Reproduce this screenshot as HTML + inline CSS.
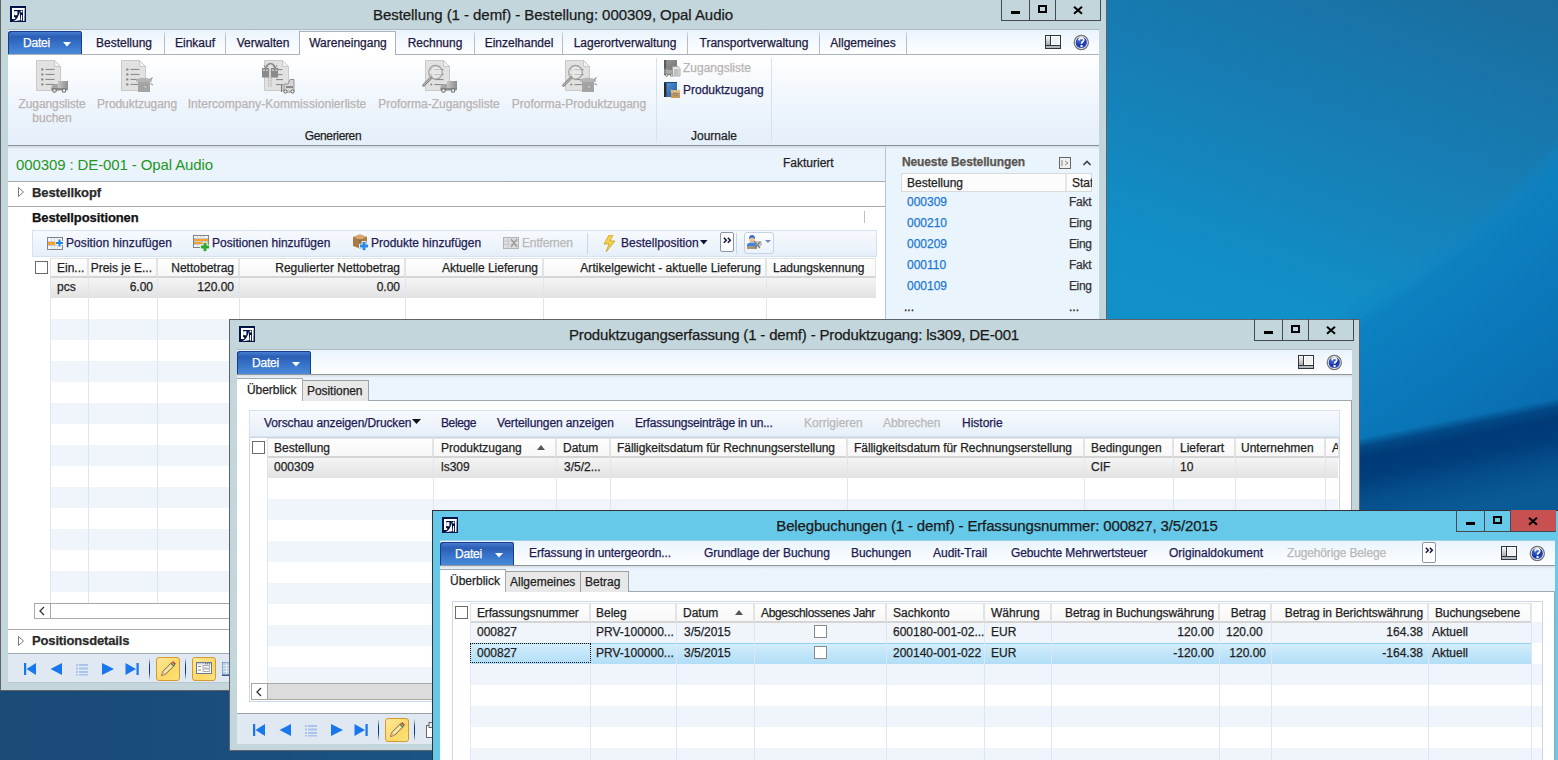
<!DOCTYPE html>
<html><head><meta charset="utf-8"><title>AX</title>
<style>
html,body{margin:0;padding:0;width:1558px;height:760px;overflow:hidden;background:#1a4b78;}
body{position:relative;font-family:"Liberation Sans", sans-serif;font-size:12px;}
body div, body svg{position:absolute;}
.t{white-space:nowrap;-webkit-text-stroke:0.25px;}
</style></head><body>
<div style="left:1107px;top:0;width:451px;height:520px;overflow:hidden"><div style="left:0;top:0;width:451px;height:520px;background:linear-gradient(200deg,#1a6c9c 0%,#1680b8 35%,#1190c8 60%,#0e8fcb 100%)"></div><div style="left:0;top:0;width:451px;height:520px;background:radial-gradient(circle at -286px -549px,rgba(20,150,210,0) 1006px,rgba(14,132,196,0.5) 1018px,rgba(12,128,192,0.92) 1030px,rgba(10,120,186,1) 1110px,rgba(8,104,172,1) 1240px)"></div><div style="left:-100px;top:510px;width:700px;height:90px;transform:rotate(-11.5deg);transform-origin:0 0;background:linear-gradient(rgba(0,60,120,0) 0px,rgba(0,62,122,0.8) 9px,#003b78 20px,#003d7a 38px,rgba(5,78,138,0.97) 62px,#0a5a96 90px)"></div><div style="left:-100px;top:599px;width:700px;height:160px;transform:rotate(-11.5deg);transform-origin:0 0;background:#0a5a96"></div></div>
<div style="left:0;top:680px;width:440px;height:80px;background:linear-gradient(90deg,#1a4a76,#1a4e7c 60%,#1a5485)"></div>
<div style="left:0px;top:-1px;width:1107px;height:692px;background:#c3d6dc;box-shadow:inset 0 0 0 1px #5f6266"></div>
<svg style="left:10px;top:6px" width="16" height="16" viewBox="0 0 16 16"><rect width="16" height="16" fill="#021346"/><g fill="#fff"><rect x="2" y="2" width="12.5" height="2"/><rect x="2" y="2" width="2" height="11"/><rect x="2" y="11.2" width="3.2" height="1.8"/><rect x="13" y="2" width="1.6" height="8"/><rect x="4.2" y="5.2" width="3.2" height="4"/><circle cx="11.5" cy="5.5" r="1"/><path d="M3 15.2Q8.5 13.5 9.6 5.5L10.4 14.2Z"/><rect x="11" y="9" width="1.1" height="5.6"/><rect x="13" y="10" width="1.5" height="5"/></g></svg>
<div class="t" style="top:5px;font-size:15px;line-height:20px;color:#1a1a1a;letter-spacing:-0.050px;left:153px;width:800px;text-align:center;">Bestellung (1 - demf) - Bestellung: 000309, Opal Audio</div>
<div style="left:1001px;top:-1px;width:100px;height:22px;border:1px solid #46494d;border-top:none;box-sizing:border-box;"></div>
<div style="left:1029px;top:-1px;width:1px;height:22px;background:#46494d"></div>
<div style="left:1055px;top:-1px;width:1px;height:22px;background:#46494d"></div>
<div style="left:1011px;top:11px;width:9px;height:3px;background:#000"></div>
<div style="left:1038px;top:5px;width:9px;height:8px;border:2px solid #000;box-sizing:border-box;"></div>
<svg style="left:1073px;top:6px" width="11" height="9"><path d="M1 0.8L9 7.8M9 0.8L1 7.8" stroke="#000" stroke-width="2"/></svg>
<div style="left:8px;top:29px;width:1091px;height:1px;background:#aeb9c2"></div>
<div style="left:8px;top:30px;width:1091px;height:24px;background:linear-gradient(#eaf4fd,#f6fafe 60%,#fdfeff)"></div>
<div style="left:8px;top:54px;width:1091px;height:1px;background:#a9b2ba"></div>
<div style="left:8px;top:31px;width:74px;height:23px;background:linear-gradient(#4f86d4 0,#3a70c4 3px,#2b5fb5 6px,#3672c8 13px,#4a8ad9 100%);border-radius:3px 3px 0 0;box-shadow:inset 1px 1px 0 #1b3c8c,inset -1px 0 0 #1b3c8c;"></div>
<div class="t" style="top:35px;font-size:12px;line-height:16px;color:#ffffff;letter-spacing:-0.203px;left:23px;">Datei</div>
<svg style="left:63px;top:42px" width="8" height="5"><path d="M0 0H8L4 4.5Z" fill="#fff"/></svg>
<div style="left:164px;top:31px;width:1px;height:23px;background:linear-gradient(#dfe6ec,#b4bcc4 30%,#b4bcc4)"></div>
<div class="t" style="top:35px;font-size:12px;line-height:16px;color:#1c1840;left:-276px;width:800px;text-align:center;">Bestellung</div>
<div style="left:225px;top:31px;width:1px;height:23px;background:linear-gradient(#dfe6ec,#b4bcc4 30%,#b4bcc4)"></div>
<div class="t" style="top:35px;font-size:12px;line-height:16px;color:#1c1840;left:-205px;width:800px;text-align:center;">Einkauf</div>
<div style="left:299px;top:31px;width:1px;height:23px;background:linear-gradient(#dfe6ec,#b4bcc4 30%,#b4bcc4)"></div>
<div class="t" style="top:35px;font-size:12px;line-height:16px;color:#1c1840;left:-137px;width:800px;text-align:center;">Verwalten</div>
<div style="left:299px;top:31px;width:97px;height:24px;background:#fff;border:1px solid #a9b2ba;border-bottom:none;box-sizing:border-box;"></div>
<div class="t" style="top:35px;font-size:12px;line-height:16px;color:#1c1840;left:-52px;width:800px;text-align:center;">Wareneingang</div>
<div style="left:474px;top:31px;width:1px;height:23px;background:linear-gradient(#dfe6ec,#b4bcc4 30%,#b4bcc4)"></div>
<div class="t" style="top:35px;font-size:12px;line-height:16px;color:#1c1840;left:35px;width:800px;text-align:center;">Rechnung</div>
<div style="left:562px;top:31px;width:1px;height:23px;background:linear-gradient(#dfe6ec,#b4bcc4 30%,#b4bcc4)"></div>
<div class="t" style="top:35px;font-size:12px;line-height:16px;color:#1c1840;left:119px;width:800px;text-align:center;">Einzelhandel</div>
<div style="left:687px;top:31px;width:1px;height:23px;background:linear-gradient(#dfe6ec,#b4bcc4 30%,#b4bcc4)"></div>
<div class="t" style="top:35px;font-size:12px;line-height:16px;color:#1c1840;left:225px;width:800px;text-align:center;">Lagerortverwaltung</div>
<div style="left:819px;top:31px;width:1px;height:23px;background:linear-gradient(#dfe6ec,#b4bcc4 30%,#b4bcc4)"></div>
<div class="t" style="top:35px;font-size:12px;line-height:16px;color:#1c1840;left:354px;width:800px;text-align:center;">Transportverwaltung</div>
<div style="left:906px;top:31px;width:1px;height:23px;background:linear-gradient(#dfe6ec,#b4bcc4 30%,#b4bcc4)"></div>
<div class="t" style="top:35px;font-size:12px;line-height:16px;color:#1c1840;left:463px;width:800px;text-align:center;">Allgemeines</div>
<svg style="left:1045px;top:35px" width="16" height="14" viewBox="0 0 16 14"><defs><linearGradient id="lg1" x1="0" y1="0" x2="0" y2="1"><stop offset="0" stop-color="#fafafa"/><stop offset="1" stop-color="#a4a8ac"/></linearGradient></defs><rect x="0.5" y="0.5" width="15" height="13" fill="#fff" stroke="#2e353b"/><rect x="1" y="1" width="4" height="9.5" fill="url(#lg1)"/><rect x="6.5" y="1.5" width="8" height="8.5" fill="#f1f1f1" stroke="#fff"/><path d="M5.5 1V10.5M1 10.5H15" stroke="#2e353b"/><rect x="1" y="11" width="14" height="2" fill="#b2b7bc"/></svg>
<svg style="left:1073px;top:34px" width="17" height="17" viewBox="0 0 17 17"><defs><radialGradient id="hg" cx="0.35" cy="0.3" r="0.8"><stop offset="0" stop-color="#4a74e0"/><stop offset="0.6" stop-color="#1434a8"/><stop offset="1" stop-color="#3a5ac8"/></radialGradient></defs><circle cx="8.3" cy="8.5" r="7.7" fill="#727272"/><circle cx="8.3" cy="8.5" r="6.5" fill="#ececec"/><circle cx="8.3" cy="8.5" r="5.6" fill="url(#hg)"/><path d="M6 6.3Q6.2 4 8.5 4Q10.8 4.1 10.7 6.1Q10.6 7.4 9.3 8.1Q8.6 8.6 8.6 9.8" stroke="#f4f4f4" stroke-width="1.8" fill="none"/><rect x="7.5" y="11" width="2.1" height="2.1" fill="#f4f4f4"/></svg>
<div style="left:8px;top:55px;width:1091px;height:90px;background:linear-gradient(#ffffff,#eef5fc 55%,#e4effa)"></div>
<div style="left:8px;top:145px;width:1091px;height:1px;background:#8a939b"></div>
<div style="left:656px;top:58px;width:1px;height:84px;background:#d8e2ec"></div>
<div style="left:771px;top:58px;width:1px;height:84px;background:#d8e2ec"></div>
<svg style="left:32px;top:60px" width="40" height="34" viewBox="-4 0 40 34"><defs><linearGradient id="tg" x1="0" x2="1"><stop offset="0" stop-color="#c4c4c4"/><stop offset="1" stop-color="#8e8e8e"/></linearGradient></defs><path d="M0.5 0.5H18.5L24.5 6.5V30.5H0.5Z" fill="#e1e1e1" stroke="#c9c9c9"/><path d="M18.5 0.5V6.5H24.5Z" fill="#f2f2f2" stroke="#c9c9c9" stroke-linejoin="round"/><circle cx="6.3" cy="9.4" r="1.2" fill="#8a8a8a"/><rect x="9.5" y="8.9" width="9" height="1.1" fill="#8c8c8c"/><circle cx="6.3" cy="14.4" r="1.2" fill="#8a8a8a"/><rect x="9.5" y="13.9" width="9" height="1.1" fill="#8c8c8c"/><circle cx="6.3" cy="19.4" r="1.2" fill="#8a8a8a"/><rect x="9.5" y="18.9" width="9" height="1.1" fill="#8c8c8c"/><circle cx="6.3" cy="24.4" r="1.2" fill="#8a8a8a"/><rect x="9.5" y="23.9" width="9" height="1.1" fill="#8c8c8c"/><rect x="22" y="21" width="10" height="8" fill="url(#tg)"/><path d="M15.5 30V26.5L18 24H22V30Z" fill="#a6a6a6"/><rect x="15.5" y="28" width="16.5" height="2.2" fill="#8a8a8a"/><circle cx="18.5" cy="30.5" r="1.8" fill="#eee" stroke="#6f6f6f" stroke-width="1.1"/><circle cx="28" cy="30.5" r="1.8" fill="#eee" stroke="#6f6f6f" stroke-width="1.1"/></svg>
<div class="t" style="top:96px;font-size:12px;line-height:16px;color:#b9b2b2;letter-spacing:-0.087px;left:-348px;width:800px;text-align:center;">Zugangsliste</div>
<div class="t" style="top:110px;font-size:12px;line-height:16px;color:#b9b2b2;left:-348px;width:800px;text-align:center;">buchen</div>
<svg style="left:117px;top:60px" width="40" height="34" viewBox="-4 0 40 34"><defs><linearGradient id="tg" x1="0" x2="1"><stop offset="0" stop-color="#c4c4c4"/><stop offset="1" stop-color="#8e8e8e"/></linearGradient></defs><path d="M0.5 0.5H18.5L24.5 6.5V30.5H0.5Z" fill="#e1e1e1" stroke="#c9c9c9"/><path d="M18.5 0.5V6.5H24.5Z" fill="#f2f2f2" stroke="#c9c9c9" stroke-linejoin="round"/><circle cx="6.3" cy="9.4" r="1.2" fill="#8a8a8a"/><rect x="9.5" y="8.9" width="9" height="1.1" fill="#8c8c8c"/><circle cx="6.3" cy="14.4" r="1.2" fill="#8a8a8a"/><rect x="9.5" y="13.9" width="9" height="1.1" fill="#8c8c8c"/><circle cx="6.3" cy="19.4" r="1.2" fill="#8a8a8a"/><rect x="9.5" y="18.9" width="9" height="1.1" fill="#8c8c8c"/><circle cx="6.3" cy="24.4" r="1.2" fill="#8a8a8a"/><rect x="9.5" y="23.9" width="9" height="1.1" fill="#8c8c8c"/><rect x="17" y="21" width="12" height="11" fill="#a4a4a4"/><path d="M15 19.5Q22 16 31 19.5L30.5 22H15.5Z" fill="#b4b4b4"/><path d="M29 20L31.5 17.5M29.5 23.5L32 25" stroke="#9a9a9a" stroke-width="1.2"/><rect x="22" y="25.5" width="4" height="2.5" fill="#c2c2c2" stroke="#909090" stroke-width="0.6"/></svg>
<div class="t" style="top:96px;font-size:12px;line-height:16px;color:#b9b2b2;letter-spacing:-0.056px;left:-263px;width:800px;text-align:center;">Produktzugang</div>
<svg style="left:260px;top:60px" width="40" height="34" viewBox="-4 0 40 34"><defs><linearGradient id="tg" x1="0" x2="1"><stop offset="0" stop-color="#c4c4c4"/><stop offset="1" stop-color="#8e8e8e"/></linearGradient></defs><path d="M0.5 0.5H18.5L24.5 6.5V30.5H0.5Z" fill="#e1e1e1" stroke="#c9c9c9"/><path d="M18.5 0.5V6.5H24.5Z" fill="#f2f2f2" stroke="#c9c9c9" stroke-linejoin="round"/><rect x="9.5" y="9" width="9" height="1.1" fill="#8c8c8c"/><rect x="9.5" y="14" width="9" height="1.1" fill="#8c8c8c"/><rect x="12" y="19" width="7" height="1.1" fill="#8c8c8c"/><rect x="12" y="24" width="7" height="1.1" fill="#8c8c8c"/><rect x="4.5" y="18" width="3" height="3" fill="none" stroke="#bdbdbd" stroke-width="0.8"/><rect x="4.5" y="23" width="3" height="3" fill="none" stroke="#bdbdbd" stroke-width="0.8"/><rect x="-2" y="8" width="7" height="9.5" fill="#8a8a8a"/><rect x="7" y="8" width="7" height="9.5" fill="#8a8a8a"/><g fill="#c8c8c8"><rect x="-1" y="9.5" width="2" height="1.5"/><rect x="2" y="9.5" width="2" height="1.5"/><rect x="8" y="9.5" width="2" height="1.5"/><rect x="11" y="9.5" width="2" height="1.5"/><rect x="5.5" y="9" width="1" height="8"/></g><path d="M2 6.5Q6.5 0.5 11 6.5" stroke="#8a8a8a" stroke-width="1.4" fill="none"/><path d="M0 5.5L2 8L4 5.5M9 5.5L11 8L13 5.5" stroke="#8a8a8a" stroke-width="1.2" fill="none"/><rect x="17" y="25" width="1.2" height="7" fill="#777"/><path d="M20 32V24H24L26 19.5H30V32Z" fill="#d4d4d4" stroke="#8a8a8a" stroke-width="0.9"/><rect x="22" y="26" width="7" height="2" fill="#8a8a8a"/><circle cx="21.5" cy="31.5" r="1.6" fill="#eee" stroke="#666"/><circle cx="28.5" cy="31.5" r="1.6" fill="#eee" stroke="#666"/></svg>
<div class="t" style="top:96px;font-size:12px;line-height:16px;color:#b9b2b2;letter-spacing:0.060px;left:-123px;width:800px;text-align:center;">Intercompany-Kommissionierliste</div>
<svg style="left:421px;top:60px" width="40" height="34" viewBox="-4 0 40 34"><defs><linearGradient id="tg" x1="0" x2="1"><stop offset="0" stop-color="#c4c4c4"/><stop offset="1" stop-color="#8e8e8e"/></linearGradient></defs><path d="M0.5 0.5H18.5L24.5 6.5V30.5H0.5Z" fill="#e1e1e1" stroke="#c9c9c9"/><path d="M18.5 0.5V6.5H24.5Z" fill="#f2f2f2" stroke="#c9c9c9" stroke-linejoin="round"/><circle cx="6.3" cy="9.5" r="1.1" fill="#8a8a8a"/><rect x="9.5" y="9.0" width="9" height="1.1" fill="#8c8c8c"/><circle cx="6.3" cy="14.5" r="1.1" fill="#8a8a8a"/><rect x="9.5" y="14.0" width="9" height="1.1" fill="#8c8c8c"/><circle cx="6.3" cy="24.5" r="1.1" fill="#8a8a8a"/><rect x="9.5" y="24.0" width="9" height="1.1" fill="#8c8c8c"/><rect x="9.5" y="19" width="9" height="1.1" fill="#8c8c8c"/><circle cx="10.5" cy="12.3" r="6.8" fill="rgba(235,235,235,0.6)" stroke="#a2a2a2" stroke-width="1.3"/><path d="M6.3 17.5L-1.5 25.5" stroke="#8a8a8a" stroke-width="2.6" stroke-linecap="round"/><path d="M6.3 17.5L-1.5 25.5" stroke="#d0d0d0" stroke-width="0.8"/><rect x="22" y="21" width="10" height="8" fill="url(#tg)"/><path d="M15.5 30V26.5L18 24H22V30Z" fill="#a6a6a6"/><rect x="15.5" y="28" width="16.5" height="2.2" fill="#8a8a8a"/><circle cx="18.5" cy="30.5" r="1.8" fill="#eee" stroke="#6f6f6f" stroke-width="1.1"/><circle cx="28" cy="30.5" r="1.8" fill="#eee" stroke="#6f6f6f" stroke-width="1.1"/></svg>
<div class="t" style="top:96px;font-size:12px;line-height:16px;color:#b9b2b2;left:39px;width:800px;text-align:center;">Proforma-Zugangsliste</div>
<svg style="left:561px;top:60px" width="40" height="34" viewBox="-4 0 40 34"><defs><linearGradient id="tg" x1="0" x2="1"><stop offset="0" stop-color="#c4c4c4"/><stop offset="1" stop-color="#8e8e8e"/></linearGradient></defs><path d="M0.5 0.5H18.5L24.5 6.5V30.5H0.5Z" fill="#e1e1e1" stroke="#c9c9c9"/><path d="M18.5 0.5V6.5H24.5Z" fill="#f2f2f2" stroke="#c9c9c9" stroke-linejoin="round"/><circle cx="6.3" cy="9.5" r="1.1" fill="#8a8a8a"/><rect x="9.5" y="9.0" width="9" height="1.1" fill="#8c8c8c"/><circle cx="6.3" cy="14.5" r="1.1" fill="#8a8a8a"/><rect x="9.5" y="14.0" width="9" height="1.1" fill="#8c8c8c"/><circle cx="6.3" cy="24.5" r="1.1" fill="#8a8a8a"/><rect x="9.5" y="24.0" width="9" height="1.1" fill="#8c8c8c"/><rect x="9.5" y="19" width="9" height="1.1" fill="#8c8c8c"/><circle cx="10.5" cy="12.3" r="6.8" fill="rgba(235,235,235,0.6)" stroke="#a2a2a2" stroke-width="1.3"/><path d="M6.3 17.5L-1.5 25.5" stroke="#8a8a8a" stroke-width="2.6" stroke-linecap="round"/><path d="M6.3 17.5L-1.5 25.5" stroke="#d0d0d0" stroke-width="0.8"/><rect x="17" y="21" width="12" height="11" fill="#a4a4a4"/><path d="M15 19.5Q22 16 31 19.5L30.5 22H15.5Z" fill="#b4b4b4"/><path d="M29 20L31.5 17.5M29.5 23.5L32 25" stroke="#9a9a9a" stroke-width="1.2"/><rect x="22" y="25.5" width="4" height="2.5" fill="#c2c2c2" stroke="#909090" stroke-width="0.6"/></svg>
<div class="t" style="top:96px;font-size:12px;line-height:16px;color:#b9b2b2;letter-spacing:0.019px;left:179px;width:800px;text-align:center;">Proforma-Produktzugang</div>
<div class="t" style="top:128px;font-size:12px;line-height:16px;color:#1e1e1e;letter-spacing:-0.355px;left:-67px;width:800px;text-align:center;">Generieren</div>
<div class="t" style="top:128px;font-size:12px;line-height:16px;color:#1e1e1e;left:314px;width:800px;text-align:center;">Journale</div>
<svg style="left:664px;top:60px" width="17" height="17"><defs><linearGradient id="jg1" x1="0" y1="0" x2="1" y2="1"><stop offset="0" stop-color="#9a9a9a"/><stop offset="1" stop-color="#6a6a6a"/></linearGradient></defs><rect x="0" y="0" width="13" height="15" fill="url(#jg1)"/><rect x="0" y="0" width="2.2" height="15" fill="#5a5a5a"/><path d="M0 11V9.5L2 8H6V14H0Z" fill="#8a8a8a"/><rect x="2" y="10" width="6" height="4" fill="#aaa"/><circle cx="2.5" cy="15" r="1.3" fill="#ddd" stroke="#666" stroke-width="0.8"/><circle cx="7.5" cy="15" r="1.3" fill="#ddd" stroke="#666" stroke-width="0.8"/><path d="M8.5 6.5H14L16 8.5V16H8.5Z" fill="#e4e4e4" stroke="#9a9a9a" stroke-width="0.8"/><path d="M10 10H14.5M10 12H14.5M10 14H14.5" stroke="#888" stroke-width="0.8"/></svg>
<div class="t" style="top:60px;font-size:12px;line-height:16px;color:#b9b2b2;left:683px;">Zugangsliste</div>
<svg style="left:664px;top:82px" width="17" height="17"><defs><linearGradient id="jg2" x1="0" y1="0" x2="1" y2="1"><stop offset="0" stop-color="#5a9ae0"/><stop offset="1" stop-color="#1e5a98"/></linearGradient></defs><rect x="0" y="0" width="13" height="15" fill="url(#jg2)"/><rect x="0" y="0" width="2.4" height="15" fill="#2a2a2a"/><rect x="0" y="0" width="13" height="1" fill="#1a4a7a"/><path d="M7 9L6 7.5L9 8H15L16 7L15.5 9Z" fill="#d8b888"/><rect x="7" y="9" width="9" height="7" fill="#c89a58"/><rect x="7" y="9" width="9" height="1.5" fill="#e0c090"/><rect x="10" y="11.5" width="3" height="2" fill="#a8b8d0" stroke="#7a6040" stroke-width="0.5"/></svg>
<div class="t" style="top:82px;font-size:12px;line-height:16px;color:#1d1a52;left:683px;">Produktzugang</div>
<div style="left:8px;top:146px;width:1091px;height:537px;background:#ffffff"></div>
<div style="left:8px;top:146px;width:877px;height:35px;background:linear-gradient(#dfe6ee,#eaf3fc 3px,#eaf4fd)"></div>
<div class="t" style="top:155px;font-size:15px;line-height:20px;color:#1f961f;letter-spacing:-0.112px;left:16px;-webkit-text-stroke:0;">000309 : DE-001 - Opal Audio</div>
<div class="t" style="top:155px;font-size:12px;line-height:16px;color:#1e1e1e;left:783px;">Fakturiert</div>
<div style="left:8px;top:181px;width:877px;height:1px;background:#a8a8a8"></div>
<svg style="left:18px;top:187px" width="6" height="10"><path d="M0.5 0.5L5.5 5L0.5 9.5Z" fill="#fff" stroke="#777"/></svg>
<div class="t" style="top:185px;font-size:13px;line-height:16px;color:#2a2a2a;font-weight:700;letter-spacing:-0.098px;left:32px;">Bestellkopf</div>
<div style="left:8px;top:206px;width:877px;height:1px;background:#a8a8a8"></div>
<div class="t" style="top:210px;font-size:13px;line-height:16px;color:#111;font-weight:700;letter-spacing:-0.109px;left:32px;">Bestellpositionen</div>
<div style="left:864px;top:211px;width:1px;height:12px;background:#c0c0c0"></div>
<div style="left:32px;top:230px;width:845px;height:27px;background:linear-gradient(#f7fafe,#e6eff9);border:1px solid #d5e2f0;box-sizing:border-box;"></div>
<svg style="left:47px;top:237px" width="17" height="14"><rect x="0.5" y="0.5" width="15" height="12" fill="#f6f6f6" stroke="#7d848c"/><path d="M1 4.5H15M1 8.5H15" stroke="#c4c8cc"/><path d="M4.5 1V12M7.5 1V12M10.5 1V12" stroke="#d4d8dc"/><rect x="1" y="5" width="9" height="3" fill="#f2a232"/><path d="M12.5 2V10M8.5 6H16.5" stroke="#fff" stroke-width="4"/><path d="M12.5 2.5V9.5M9 6H16" stroke="#1f86e0" stroke-width="2.2"/></svg>
<div class="t" style="top:235px;font-size:12px;line-height:16px;color:#1d1a52;letter-spacing:0.066px;left:66px;">Position hinzufügen</div>
<svg style="left:193px;top:235px" width="18" height="18"><rect x="0.5" y="0.5" width="15" height="12" fill="#f6f6f6" stroke="#7d848c"/><path d="M1 3.5H15M1 6.5H15M1 9.5H15" stroke="#c4c8cc"/><path d="M4.5 1V12M7.5 1V12M10.5 1V12" stroke="#d4d8dc"/><rect x="1" y="4" width="14" height="2" fill="#f2a232"/><rect x="1" y="7" width="14" height="2" fill="#f2a232"/><path d="M12 7V17M7 12H17" stroke="#fff" stroke-width="4.6"/><path d="M12 7.8V16.2M7.8 12H16.2" stroke="#2ea82e" stroke-width="3"/></svg>
<div class="t" style="top:235px;font-size:12px;line-height:16px;color:#1d1a52;letter-spacing:0.015px;left:212px;">Positionen hinzufügen</div>
<svg style="left:352px;top:234px" width="18" height="18"><path d="M1 3L8 0.5L15 3V12L8 14.5L1 12Z" fill="#a87a48"/><path d="M1 3L8 5.5L15 3L8 0.5Z" fill="#d4a870"/><path d="M8 5.5V14.5" stroke="#7a5430"/><path d="M12 7V17M7 12H17" stroke="#fff" stroke-width="4.6"/><path d="M12 7.8V16.2M7.8 12H16.2" stroke="#2a8ae6" stroke-width="3"/></svg>
<div class="t" style="top:235px;font-size:12px;line-height:16px;color:#1d1a52;left:371px;">Produkte hinzufügen</div>
<svg style="left:503px;top:237px" width="16" height="12"><rect x="0.5" y="0.5" width="15" height="11" fill="#dedede" stroke="#b4b4b4"/><path d="M1 4H15M1 7.5H15M5 1V11" stroke="#c4c4c4" stroke-width="0.8"/><path d="M8 2L14 10M14 2L8 10" stroke="#9a9a9a" stroke-width="1.3"/></svg>
<div class="t" style="top:235px;font-size:12px;line-height:16px;color:#b8b8b8;letter-spacing:-0.150px;left:522px;">Entfernen</div>
<div style="left:587px;top:233px;width:1px;height:21px;background:#c9d6e4"></div>
<svg style="left:603px;top:235px" width="13" height="17"><path d="M6 0L1 9H6L3 17L12 6H7L10 0Z" fill="#f4d24a" stroke="#c9a020" stroke-width="0.8"/></svg>
<div class="t" style="top:235px;font-size:12px;line-height:16px;color:#1d1a52;letter-spacing:0.021px;left:621px;">Bestellposition</div>
<svg style="left:700px;top:240px" width="8" height="5"><path d="M0 0H7.5L3.75 4.5Z" fill="#10103a"/></svg>
<div style="left:720px;top:232px;width:14px;height:20px;background:#fff;border:1px solid #8a96a8;border-radius:2px;box-sizing:border-box;"></div>
<svg style="left:723px;top:237px" width="9" height="7"><path d="M0.8 0.8L3.3 3.3L0.8 5.8M4.8 0.8L7.3 3.3L4.8 5.8" stroke="#10103a" stroke-width="1.5" fill="none"/></svg>
<div style="left:736px;top:233px;width:1px;height:21px;background:#c9d6e4"></div>
<div style="left:744px;top:232px;width:30px;height:22px;background:linear-gradient(#fbfdff,#eaf2fb);border:1px solid #c4d2e2;border-radius:3px;box-sizing:border-box;"></div>
<svg style="left:746px;top:234px" width="26" height="16"><path d="M3 5Q3 1 6 1Q9 1 9 5Z" fill="#2a6ad0"/><circle cx="6" cy="6" r="2.6" fill="#f0c090"/><path d="M1 15V11Q1 8.5 6 8.5Q11 8.5 11 11V15Z" fill="#3a86e0"/><path d="M1 12H11V15H1Z" fill="#f0a030" opacity="0.6"/><path d="M8 7L14 14M14 8L9 14" stroke="#777" stroke-width="1.4"/><rect x="10" y="8" width="5" height="3" fill="none" stroke="#999"/><path d="M19 6H25L22 9Z" fill="#7088b0"/></svg>
<div style="left:50px;top:277px;width:826px;height:21px;background:linear-gradient(#f5f5f5,#ebebeb 55%,#e2e2e2)"></div>
<div style="left:50px;top:319px;width:826px;height:21px;background:#f0f5fc"></div>
<div style="left:50px;top:361px;width:826px;height:21px;background:#f0f5fc"></div>
<div style="left:50px;top:403px;width:826px;height:21px;background:#f0f5fc"></div>
<div style="left:50px;top:445px;width:826px;height:21px;background:#f0f5fc"></div>
<div style="left:50px;top:487px;width:826px;height:21px;background:#f0f5fc"></div>
<div style="left:50px;top:529px;width:826px;height:21px;background:#f0f5fc"></div>
<div style="left:50px;top:571px;width:826px;height:21px;background:#f0f5fc"></div>
<div style="left:50px;top:278px;width:1px;height:325px;background:#dde7f3"></div>
<div style="left:88px;top:278px;width:1px;height:325px;background:#dde7f3"></div>
<div style="left:157px;top:278px;width:1px;height:325px;background:#dde7f3"></div>
<div style="left:239px;top:278px;width:1px;height:325px;background:#dde7f3"></div>
<div style="left:405px;top:278px;width:1px;height:325px;background:#dde7f3"></div>
<div style="left:543px;top:278px;width:1px;height:325px;background:#dde7f3"></div>
<div style="left:766px;top:278px;width:1px;height:325px;background:#dde7f3"></div>
<div style="left:50px;top:258px;width:38px;height:20px;background:linear-gradient(#fefefe,#f7f7f7);border:1px solid #e3e3e3;border-bottom:2px solid #d5d5d5;box-sizing:border-box;"></div>
<div style="left:88px;top:258px;width:69px;height:20px;background:linear-gradient(#fefefe,#f7f7f7);border:1px solid #e3e3e3;border-bottom:2px solid #d5d5d5;box-sizing:border-box;"></div>
<div style="left:157px;top:258px;width:82px;height:20px;background:linear-gradient(#fefefe,#f7f7f7);border:1px solid #e3e3e3;border-bottom:2px solid #d5d5d5;box-sizing:border-box;"></div>
<div style="left:239px;top:258px;width:166px;height:20px;background:linear-gradient(#fefefe,#f7f7f7);border:1px solid #e3e3e3;border-bottom:2px solid #d5d5d5;box-sizing:border-box;"></div>
<div style="left:405px;top:258px;width:138px;height:20px;background:linear-gradient(#fefefe,#f7f7f7);border:1px solid #e3e3e3;border-bottom:2px solid #d5d5d5;box-sizing:border-box;"></div>
<div style="left:543px;top:258px;width:223px;height:20px;background:linear-gradient(#fefefe,#f7f7f7);border:1px solid #e3e3e3;border-bottom:2px solid #d5d5d5;box-sizing:border-box;"></div>
<div style="left:766px;top:258px;width:110px;height:20px;background:linear-gradient(#fefefe,#f7f7f7);border:1px solid #e3e3e3;border-bottom:2px solid #d5d5d5;box-sizing:border-box;"></div>
<div style="left:35px;top:261px;width:13px;height:13px;border:1px solid #6b6b6b;box-sizing:border-box;background:#fff"></div>
<div class="t" style="top:260px;font-size:12px;line-height:16px;color:#1e1e1e;left:57px;">Ein...</div>
<div class="t" style="top:260px;font-size:12px;line-height:16px;color:#1e1e1e;left:-448px;width:600px;text-align:right;">Preis je E...</div>
<div class="t" style="top:260px;font-size:12px;line-height:16px;color:#1e1e1e;left:-366px;width:600px;text-align:right;">Nettobetrag</div>
<div class="t" style="top:260px;font-size:12px;line-height:16px;color:#1e1e1e;left:-200px;width:600px;text-align:right;">Regulierter Nettobetrag</div>
<div class="t" style="top:260px;font-size:12px;line-height:16px;color:#1e1e1e;left:-62px;width:600px;text-align:right;">Aktuelle Lieferung</div>
<div class="t" style="top:260px;font-size:12px;line-height:16px;color:#1e1e1e;letter-spacing:0.036px;left:161px;width:600px;text-align:right;">Artikelgewicht - aktuelle Lieferung</div>
<div class="t" style="top:260px;font-size:12px;line-height:16px;color:#1e1e1e;letter-spacing:-0.042px;left:773px;">Ladungskennung</div>
<div class="t" style="top:279px;font-size:12px;line-height:16px;color:#1e1e1e;left:57px;">pcs</div>
<div class="t" style="top:279px;font-size:12px;line-height:16px;color:#1e1e1e;left:-447px;width:600px;text-align:right;">6.00</div>
<div class="t" style="top:279px;font-size:12px;line-height:16px;color:#1e1e1e;left:-366px;width:600px;text-align:right;">120.00</div>
<div class="t" style="top:279px;font-size:12px;line-height:16px;color:#1e1e1e;left:-200px;width:600px;text-align:right;">0.00</div>
<div style="left:34px;top:603px;width:842px;height:16px;background:#fff;border:1px solid #a8a8a8;box-sizing:border-box;"></div>
<div style="left:50px;top:603px;width:1px;height:16px;background:#a8a8a8"></div>
<svg style="left:38px;top:606px" width="8" height="10"><path d="M6 1L2 5L6 9" stroke="#333" stroke-width="1.3" fill="none"/></svg>
<div style="left:8px;top:629px;width:877px;height:1px;background:#a8a8a8"></div>
<svg style="left:18px;top:636px" width="6" height="10"><path d="M0.5 0.5L5.5 5L0.5 9.5Z" fill="#fff" stroke="#777"/></svg>
<div class="t" style="top:633px;font-size:13px;line-height:16px;color:#2a2a2a;font-weight:700;letter-spacing:-0.150px;left:32px;">Positionsdetails</div>
<div style="left:8px;top:653px;width:1091px;height:1px;background:#a0a8b0"></div>
<div style="left:8px;top:654px;width:1091px;height:29px;background:#e0e8f1"></div>
<div style="left:8px;top:682px;width:1091px;height:1px;background:#bac6ce"></div>
<svg style="left:24px;top:663px" width="120" height="13"><rect x="0" y="0" width="2.2" height="12" fill="#1877ee"/><path d="M12 0V12L2.5 6Z" fill="#1877ee"/><path d="M38 0V12L26.5 6Z" fill="#1877ee"/><g fill="#a8c4ec"><rect x="52" y="1" width="2" height="2"/><rect x="55" y="1" width="9" height="2"/><rect x="52" y="4.5" width="2" height="2"/><rect x="55" y="4.5" width="9" height="2"/><rect x="52" y="8" width="2" height="2"/><rect x="55" y="8" width="9" height="2"/><rect x="52" y="11" width="2" height="1.5"/><rect x="55" y="11" width="9" height="1.5"/></g><path d="M78 0V12L90 6Z" fill="#1877ee"/><path d="M101.5 0V12L112 6Z" fill="#1877ee"/><rect x="112.5" y="0" width="2.2" height="12" fill="#1877ee"/></svg>
<div style="left:149px;top:658px;width:1px;height:22px;background:linear-gradient(rgba(10,50,110,0),#0b3a78 35%,#0b3a78 65%,rgba(10,50,110,0))"></div>
<div style="left:156px;top:657px;width:24px;height:24px;background:linear-gradient(135deg,#fde89a,#fcd866 60%,#fde27e);border:1px solid #d49a30;border-radius:3px;box-sizing:border-box;"></div>
<svg style="left:160px;top:660px" width="17" height="17"><path d="M1.5 15.5L2.8 11.5L12 2.3L14.7 5L5.5 14.2Z" fill="#fbe7a0" stroke="#555" stroke-width="0.9"/><path d="M2.8 11.5L5.5 14.2L1.5 15.5Z" fill="#e8b080"/><path d="M12 2.3L14.7 5L16 3.7L13.3 1Z" fill="#d04848"/><path d="M11 3.3L13.7 6" stroke="#2a8a4a" stroke-width="1.2"/></svg>
<div style="left:185px;top:658px;width:1px;height:22px;background:linear-gradient(rgba(10,50,110,0),#0b3a78 35%,#0b3a78 65%,rgba(10,50,110,0))"></div>
<div style="left:192px;top:657px;width:24px;height:24px;background:linear-gradient(135deg,#fde89a,#fcd866 60%,#fde27e);border:1px solid #d49a30;border-radius:3px;box-sizing:border-box;"></div>
<svg style="left:196px;top:662px" width="17" height="13"><rect x="0.5" y="0.5" width="15" height="11" fill="#fff" stroke="#6a7a90"/><rect x="1" y="1" width="14" height="1.5" fill="#c8d0dc"/><path d="M2 4.5H5M2 8H5" stroke="#888" stroke-width="1"/><rect x="7" y="3.5" width="6.5" height="2.5" fill="none" stroke="#999" stroke-width="0.8"/><rect x="7" y="7" width="6.5" height="2.5" fill="none" stroke="#999" stroke-width="0.8"/><path d="M9 1.8H10M11 1.8H12M13 1.8H14" stroke="#556"/></svg>
<svg style="left:222px;top:662px" width="16" height="14"><g fill="#e6eef8" stroke="#5a7aa8" stroke-width="0.6"><rect x="0.5" y="0.5" width="15" height="12.5"/></g><g fill="#b8cde8"><rect x="1" y="1" width="3" height="2.2"/><rect x="5" y="1" width="10" height="2.2"/><rect x="1" y="4" width="3" height="2.2"/><rect x="5" y="4" width="10" height="2.2"/><rect x="1" y="7" width="3" height="2.2"/><rect x="5" y="7" width="10" height="2.2"/><rect x="1" y="10" width="3" height="2.2"/><rect x="5" y="10" width="10" height="2.2"/></g><rect x="0" y="12.5" width="16" height="1.5" fill="#3a5a90"/></svg>
<div style="left:885px;top:146px;width:1px;height:537px;background:#b8c4d0"></div>
<div style="left:886px;top:146px;width:213px;height:537px;background:#eaf4fd"></div>
<div style="left:8px;top:146px;width:1091px;height:3px;background:linear-gradient(#d3d9de,rgba(220,228,236,0))"></div>
<div class="t" style="top:154px;font-size:12px;line-height:16px;color:#5a5550;font-weight:700;letter-spacing:-0.119px;left:902px;">Neueste Bestellungen</div>
<svg style="left:1059px;top:157px" width="12" height="12"><rect x="0.5" y="0.5" width="11" height="11" fill="#eee" stroke="#666"/><path d="M3 3V9M6 4L9 6L6 8" stroke="#888" fill="none"/></svg>
<svg style="left:1083px;top:160px" width="8" height="6"><path d="M0.5 5L4 1.5L7.5 5" stroke="#444" stroke-width="1.6" fill="none"/></svg>
<div style="left:901px;top:173px;width:191px;height:19px;background:#fcfcfc;border:1px solid #dadada;box-sizing:border-box;"></div>
<div style="left:1065px;top:174px;width:2px;height:17px;background:#e6e6e6"></div>
<div class="t" style="top:175px;font-size:12px;line-height:16px;color:#1e1e1e;left:907px;">Bestellung</div>
<div class="t" style="top:175px;font-size:12px;line-height:16px;color:#1e1e1e;left:1072px;">Stat</div>
<div class="t" style="top:194px;font-size:12px;line-height:16px;color:#1e78d2;left:907px;">000309</div>
<div class="t" style="top:194px;font-size:12px;line-height:16px;color:#333;letter-spacing:-0.211px;left:1069px;">Fakt</div>
<div class="t" style="top:215px;font-size:12px;line-height:16px;color:#1e78d2;left:907px;">000210</div>
<div class="t" style="top:215px;font-size:12px;line-height:16px;color:#333;letter-spacing:-0.383px;left:1069px;">Eing</div>
<div class="t" style="top:236px;font-size:12px;line-height:16px;color:#1e78d2;left:907px;">000209</div>
<div class="t" style="top:236px;font-size:12px;line-height:16px;color:#333;letter-spacing:-0.383px;left:1069px;">Eing</div>
<div class="t" style="top:257px;font-size:12px;line-height:16px;color:#1e78d2;left:907px;">000110</div>
<div class="t" style="top:257px;font-size:12px;line-height:16px;color:#333;letter-spacing:-0.211px;left:1069px;">Fakt</div>
<div class="t" style="top:278px;font-size:12px;line-height:16px;color:#1e78d2;left:907px;">000109</div>
<div class="t" style="top:278px;font-size:12px;line-height:16px;color:#333;letter-spacing:-0.383px;left:1069px;">Eing</div>
<div style="left:1092px;top:172px;width:7px;height:148px;background:#eaf4fd"></div>
<div class="t" style="top:299px;font-size:12px;line-height:16px;color:#111;left:904px;">...</div>
<div class="t" style="top:299px;font-size:12px;line-height:16px;color:#111;left:1069px;">...</div>
<div style="left:229px;top:319px;width:1131px;height:432px;background:#c3d6dc;box-shadow:inset 0 0 0 1px #5f6266"></div>
<svg style="left:239px;top:326px" width="16" height="16" viewBox="0 0 16 16"><rect width="16" height="16" fill="#021346"/><g fill="#fff"><rect x="2" y="2" width="12.5" height="2"/><rect x="2" y="2" width="2" height="11"/><rect x="2" y="11.2" width="3.2" height="1.8"/><rect x="13" y="2" width="1.6" height="8"/><rect x="4.2" y="5.2" width="3.2" height="4"/><circle cx="11.5" cy="5.5" r="1"/><path d="M3 15.2Q8.5 13.5 9.6 5.5L10.4 14.2Z"/><rect x="11" y="9" width="1.1" height="5.6"/><rect x="13" y="10" width="1.5" height="5"/></g></svg>
<div class="t" style="top:325px;font-size:15px;line-height:20px;color:#1a1a1a;letter-spacing:-0.171px;left:394px;width:800px;text-align:center;">Produktzugangserfassung (1 - demf) - Produktzugang: ls309, DE-001</div>
<div style="left:1254px;top:319px;width:100px;height:22px;border:1px solid #46494d;border-top:none;box-sizing:border-box;"></div>
<div style="left:1282px;top:319px;width:1px;height:22px;background:#46494d"></div>
<div style="left:1308px;top:319px;width:1px;height:22px;background:#46494d"></div>
<div style="left:1264px;top:331px;width:9px;height:3px;background:#000"></div>
<div style="left:1291px;top:325px;width:9px;height:8px;border:2px solid #000;box-sizing:border-box;"></div>
<svg style="left:1326px;top:326px" width="11" height="9"><path d="M1 0.8L9 7.8M9 0.8L1 7.8" stroke="#000" stroke-width="2"/></svg>
<div style="left:237px;top:349px;width:1115px;height:1px;background:#aeb9c2"></div>
<div style="left:237px;top:350px;width:1115px;height:24px;background:linear-gradient(#eaf4fd,#f6fafe 60%,#fdfeff)"></div>
<div style="left:237px;top:374px;width:1115px;height:1px;background:#8f979e"></div>
<div style="left:237px;top:351px;width:74px;height:23px;background:linear-gradient(#4f86d4 0,#3a70c4 3px,#2b5fb5 6px,#3672c8 13px,#4a8ad9 100%);border-radius:3px 3px 0 0;box-shadow:inset 1px 1px 0 #1b3c8c,inset -1px 0 0 #1b3c8c;"></div>
<div class="t" style="top:355px;font-size:12px;line-height:16px;color:#ffffff;letter-spacing:-0.203px;left:252px;">Datei</div>
<svg style="left:292px;top:362px" width="8" height="5"><path d="M0 0H8L4 4.5Z" fill="#fff"/></svg>
<svg style="left:1298px;top:355px" width="16" height="14" viewBox="0 0 16 14"><defs><linearGradient id="lg1" x1="0" y1="0" x2="0" y2="1"><stop offset="0" stop-color="#fafafa"/><stop offset="1" stop-color="#a4a8ac"/></linearGradient></defs><rect x="0.5" y="0.5" width="15" height="13" fill="#fff" stroke="#2e353b"/><rect x="1" y="1" width="4" height="9.5" fill="url(#lg1)"/><rect x="6.5" y="1.5" width="8" height="8.5" fill="#f1f1f1" stroke="#fff"/><path d="M5.5 1V10.5M1 10.5H15" stroke="#2e353b"/><rect x="1" y="11" width="14" height="2" fill="#b2b7bc"/></svg>
<svg style="left:1326px;top:354px" width="17" height="17" viewBox="0 0 17 17"><defs><radialGradient id="hg" cx="0.35" cy="0.3" r="0.8"><stop offset="0" stop-color="#4a74e0"/><stop offset="0.6" stop-color="#1434a8"/><stop offset="1" stop-color="#3a5ac8"/></radialGradient></defs><circle cx="8.3" cy="8.5" r="7.7" fill="#727272"/><circle cx="8.3" cy="8.5" r="6.5" fill="#ececec"/><circle cx="8.3" cy="8.5" r="5.6" fill="url(#hg)"/><path d="M6 6.3Q6.2 4 8.5 4Q10.8 4.1 10.7 6.1Q10.6 7.4 9.3 8.1Q8.6 8.6 8.6 9.8" stroke="#f4f4f4" stroke-width="1.8" fill="none"/><rect x="7.5" y="11" width="2.1" height="2.1" fill="#f4f4f4"/></svg>
<div style="left:237px;top:375px;width:1115px;height:26px;background:linear-gradient(#d8dce0,#eaf4fd 3px,#ebf5fe)"></div>
<div style="left:237px;top:400px;width:1115px;height:1px;background:#a0a8b0"></div>
<div style="left:302px;top:380px;width:67px;height:21px;background:#e8e8e8;border:1px solid #a0a0a0;border-bottom:none;box-sizing:border-box;"></div>
<div style="left:237px;top:378px;width:66px;height:24px;background:#fff;border:1px solid #a0a8b0;border-left:none;border-bottom:none;box-sizing:border-box;"></div>
<div class="t" style="top:382px;font-size:12px;line-height:16px;color:#1e1e1e;letter-spacing:-0.057px;left:247px;">Überblick</div>
<div class="t" style="top:383px;font-size:12px;line-height:16px;color:#1e1e1e;letter-spacing:-0.055px;left:307px;">Positionen</div>
<div style="left:237px;top:401px;width:1115px;height:312px;background:#fff;border-right:1px solid #9aa2aa;box-sizing:border-box;"></div>
<div style="left:237px;top:713px;width:1115px;height:1px;background:#9aa2aa"></div>
<div style="left:249px;top:410px;width:1091px;height:27px;background:linear-gradient(#f7fafe,#e6eff9);border:1px solid #d5e2f0;box-sizing:border-box;"></div>
<div class="t" style="top:415px;font-size:12px;line-height:16px;color:#1d1a52;letter-spacing:-0.108px;left:264px;">Vorschau anzeigen/Drucken</div>
<svg style="left:412px;top:419px" width="9" height="5"><path d="M0 0H9L4.5 5Z" fill="#111"/></svg>
<div class="t" style="top:415px;font-size:12px;line-height:16px;color:#1d1a52;letter-spacing:-0.396px;left:441px;">Belege</div>
<div class="t" style="top:415px;font-size:12px;line-height:16px;color:#1d1a52;letter-spacing:-0.098px;left:497px;">Verteilungen anzeigen</div>
<div class="t" style="top:415px;font-size:12px;line-height:16px;color:#1d1a52;letter-spacing:-0.191px;left:635px;">Erfassungseinträge in un...</div>
<div class="t" style="top:415px;font-size:12px;line-height:16px;color:#b8b8b8;left:804px;">Korrigieren</div>
<div class="t" style="top:415px;font-size:12px;line-height:16px;color:#b8b8b8;letter-spacing:-0.083px;left:883px;">Abbrechen</div>
<div class="t" style="top:415px;font-size:12px;line-height:16px;color:#1d1a52;left:962px;">Historie</div>
<div style="left:249px;top:437px;width:1091px;height:265px;border:1px solid #c9d7e8;box-sizing:border-box;background:#fff"></div>
<div style="left:267px;top:457px;width:1071px;height:21px;background:linear-gradient(#f5f5f5,#ebebeb 55%,#e2e2e2)"></div>
<div style="left:267px;top:499px;width:1071px;height:21px;background:#f0f5fc"></div>
<div style="left:267px;top:541px;width:1071px;height:21px;background:#f0f5fc"></div>
<div style="left:267px;top:583px;width:1071px;height:21px;background:#f0f5fc"></div>
<div style="left:267px;top:625px;width:1071px;height:21px;background:#f0f5fc"></div>
<div style="left:267px;top:667px;width:1071px;height:16px;background:#f0f5fc"></div>
<div style="left:267px;top:458px;width:1px;height:225px;background:#dde7f3"></div>
<div style="left:433px;top:458px;width:1px;height:225px;background:#dde7f3"></div>
<div style="left:556px;top:458px;width:1px;height:225px;background:#dde7f3"></div>
<div style="left:610px;top:458px;width:1px;height:225px;background:#dde7f3"></div>
<div style="left:847px;top:458px;width:1px;height:225px;background:#dde7f3"></div>
<div style="left:1084px;top:458px;width:1px;height:225px;background:#dde7f3"></div>
<div style="left:1173px;top:458px;width:1px;height:225px;background:#dde7f3"></div>
<div style="left:1235px;top:458px;width:1px;height:225px;background:#dde7f3"></div>
<div style="left:1325px;top:458px;width:1px;height:225px;background:#dde7f3"></div>
<div style="left:267px;top:438px;width:166px;height:20px;background:linear-gradient(#fefefe,#f7f7f7);border:1px solid #e3e3e3;border-bottom:2px solid #d5d5d5;box-sizing:border-box;"></div>
<div style="left:433px;top:438px;width:123px;height:20px;background:linear-gradient(#fefefe,#f7f7f7);border:1px solid #e3e3e3;border-bottom:2px solid #d5d5d5;box-sizing:border-box;"></div>
<div style="left:556px;top:438px;width:54px;height:20px;background:linear-gradient(#fefefe,#f7f7f7);border:1px solid #e3e3e3;border-bottom:2px solid #d5d5d5;box-sizing:border-box;"></div>
<div style="left:610px;top:438px;width:237px;height:20px;background:linear-gradient(#fefefe,#f7f7f7);border:1px solid #e3e3e3;border-bottom:2px solid #d5d5d5;box-sizing:border-box;"></div>
<div style="left:847px;top:438px;width:237px;height:20px;background:linear-gradient(#fefefe,#f7f7f7);border:1px solid #e3e3e3;border-bottom:2px solid #d5d5d5;box-sizing:border-box;"></div>
<div style="left:1084px;top:438px;width:89px;height:20px;background:linear-gradient(#fefefe,#f7f7f7);border:1px solid #e3e3e3;border-bottom:2px solid #d5d5d5;box-sizing:border-box;"></div>
<div style="left:1173px;top:438px;width:62px;height:20px;background:linear-gradient(#fefefe,#f7f7f7);border:1px solid #e3e3e3;border-bottom:2px solid #d5d5d5;box-sizing:border-box;"></div>
<div style="left:1235px;top:438px;width:90px;height:20px;background:linear-gradient(#fefefe,#f7f7f7);border:1px solid #e3e3e3;border-bottom:2px solid #d5d5d5;box-sizing:border-box;"></div>
<div style="left:1325px;top:438px;width:14px;height:20px;background:linear-gradient(#fefefe,#f7f7f7);border:1px solid #e3e3e3;border-bottom:2px solid #d5d5d5;box-sizing:border-box;"></div>
<div style="left:252px;top:441px;width:13px;height:13px;border:1px solid #6b6b6b;box-sizing:border-box;background:#fff"></div>
<div class="t" style="top:440px;font-size:12px;line-height:16px;color:#1e1e1e;left:274px;">Bestellung</div>
<div class="t" style="top:440px;font-size:12px;line-height:16px;color:#1e1e1e;left:441px;">Produktzugang</div>
<svg style="left:537px;top:445px" width="8" height="5"><path d="M0 5H8L4 0Z" fill="#555"/></svg>
<div class="t" style="top:440px;font-size:12px;line-height:16px;color:#1e1e1e;left:563px;">Datum</div>
<div class="t" style="top:440px;font-size:12px;line-height:16px;color:#1e1e1e;letter-spacing:-0.053px;left:617px;">Fälligkeitsdatum für Rechnungserstellung</div>
<div class="t" style="top:440px;font-size:12px;line-height:16px;color:#1e1e1e;letter-spacing:-0.053px;left:854px;">Fälligkeitsdatum für Rechnungserstellung</div>
<div class="t" style="top:440px;font-size:12px;line-height:16px;color:#1e1e1e;letter-spacing:-0.012px;left:1091px;">Bedingungen</div>
<div class="t" style="top:440px;font-size:12px;line-height:16px;color:#1e1e1e;left:1180px;">Lieferart</div>
<div class="t" style="top:440px;font-size:12px;line-height:16px;color:#1e1e1e;left:1241px;">Unternehmen</div>
<div style="left:1326px;top:438px;width:12px;height:19px;overflow:hidden"><div class="t" style="left:6px;top:2px;font-size:12px;line-height:16px;color:#1e1e1e">Abc</div></div>
<div class="t" style="top:459px;font-size:12px;line-height:16px;color:#1e1e1e;left:274px;">000309</div>
<div class="t" style="top:459px;font-size:12px;line-height:16px;color:#1e1e1e;left:441px;">ls309</div>
<div class="t" style="top:459px;font-size:12px;line-height:16px;color:#1e1e1e;left:564px;">3/5/2...</div>
<div class="t" style="top:459px;font-size:12px;line-height:16px;color:#1e1e1e;left:1091px;">CIF</div>
<div class="t" style="top:459px;font-size:12px;line-height:16px;color:#1e1e1e;left:1180px;">10</div>
<div style="left:251px;top:683px;width:1088px;height:17px;background:#dcdcdc;border:1px solid #a8a8a8;box-sizing:border-box;"></div>
<div style="left:251px;top:683px;width:17px;height:17px;background:#fff;border:1px solid #a8a8a8;box-sizing:border-box;"></div>
<svg style="left:255px;top:687px" width="8" height="10"><path d="M6 1L2 5L6 9" stroke="#333" stroke-width="1.3" fill="none"/></svg>
<div style="left:237px;top:714px;width:1115px;height:30px;background:#e0e8f1"></div>
<svg style="left:253px;top:724px" width="120" height="13"><rect x="0" y="0" width="2.2" height="12" fill="#1877ee"/><path d="M12 0V12L2.5 6Z" fill="#1877ee"/><path d="M38 0V12L26.5 6Z" fill="#1877ee"/><g fill="#a8c4ec"><rect x="52" y="1" width="2" height="2"/><rect x="55" y="1" width="9" height="2"/><rect x="52" y="4.5" width="2" height="2"/><rect x="55" y="4.5" width="9" height="2"/><rect x="52" y="8" width="2" height="2"/><rect x="55" y="8" width="9" height="2"/><rect x="52" y="11" width="2" height="1.5"/><rect x="55" y="11" width="9" height="1.5"/></g><path d="M78 0V12L90 6Z" fill="#1877ee"/><path d="M101.5 0V12L112 6Z" fill="#1877ee"/><rect x="112.5" y="0" width="2.2" height="12" fill="#1877ee"/></svg>
<div style="left:378px;top:719px;width:1px;height:22px;background:linear-gradient(rgba(10,50,110,0),#0b3a78 35%,#0b3a78 65%,rgba(10,50,110,0))"></div>
<div style="left:385px;top:718px;width:24px;height:24px;background:linear-gradient(135deg,#fde89a,#fcd866 60%,#fde27e);border:1px solid #d49a30;border-radius:3px;box-sizing:border-box;"></div>
<svg style="left:389px;top:721px" width="17" height="17"><path d="M1.5 15.5L2.8 11.5L12 2.3L14.7 5L5.5 14.2Z" fill="#fbe7a0" stroke="#555" stroke-width="0.9"/><path d="M2.8 11.5L5.5 14.2L1.5 15.5Z" fill="#e8b080"/><path d="M12 2.3L14.7 5L16 3.7L13.3 1Z" fill="#d04848"/><path d="M11 3.3L13.7 6" stroke="#2a8a4a" stroke-width="1.2"/></svg>
<div style="left:414px;top:719px;width:1px;height:22px;background:linear-gradient(rgba(10,50,110,0),#0b3a78 35%,#0b3a78 65%,rgba(10,50,110,0))"></div>
<svg style="left:426px;top:722px" width="10" height="16"><rect x="0.5" y="3.5" width="9" height="12" fill="#fff" stroke="#666"/><rect x="3" y="0.5" width="6" height="5" fill="#eee" stroke="#666"/></svg>
<div style="left:432px;top:510px;width:1130px;height:300px;background:#66c9e9;box-shadow:inset 0 0 0 1px #2f3336"></div>
<svg style="left:442px;top:517px" width="16" height="16" viewBox="0 0 16 16"><rect width="16" height="16" fill="#021346"/><g fill="#fff"><rect x="2" y="2" width="12.5" height="2"/><rect x="2" y="2" width="2" height="11"/><rect x="2" y="11.2" width="3.2" height="1.8"/><rect x="13" y="2" width="1.6" height="8"/><rect x="4.2" y="5.2" width="3.2" height="4"/><circle cx="11.5" cy="5.5" r="1"/><path d="M3 15.2Q8.5 13.5 9.6 5.5L10.4 14.2Z"/><rect x="11" y="9" width="1.1" height="5.6"/><rect x="13" y="10" width="1.5" height="5"/></g></svg>
<div class="t" style="top:516px;font-size:15px;line-height:20px;color:#1a1a1a;letter-spacing:-0.142px;left:597px;width:800px;text-align:center;">Belegbuchungen (1 - demf) - Erfassungsnummer: 000827, 3/5/2015</div>
<div style="left:1456px;top:510px;width:100px;height:22px;border:1px solid #46494d;border-top:none;box-sizing:border-box;"></div>
<div style="left:1484px;top:510px;width:1px;height:22px;background:#46494d"></div>
<div style="left:1510px;top:510px;width:1px;height:22px;background:#46494d"></div>
<div style="left:1511px;top:510px;width:45px;height:21px;background:#c75050"></div>
<div style="left:1466px;top:522px;width:9px;height:3px;background:#000"></div>
<div style="left:1493px;top:516px;width:9px;height:8px;border:2px solid #000;box-sizing:border-box;"></div>
<svg style="left:1528px;top:517px" width="11" height="9"><path d="M1 0.8L9 7.8M9 0.8L1 7.8" stroke="#000" stroke-width="2"/></svg>
<div style="left:440px;top:540px;width:1115px;height:1px;background:#9fd0e6"></div>
<div style="left:440px;top:541px;width:1115px;height:24px;background:linear-gradient(#eaf4fd,#f6fafe 60%,#fdfeff)"></div>
<div style="left:440px;top:565px;width:1115px;height:1px;background:#8f979e"></div>
<div style="left:440px;top:542px;width:74px;height:23px;background:linear-gradient(#4f86d4 0,#3a70c4 3px,#2b5fb5 6px,#3672c8 13px,#4a8ad9 100%);border-radius:3px 3px 0 0;box-shadow:inset 1px 1px 0 #1b3c8c,inset -1px 0 0 #1b3c8c;"></div>
<div class="t" style="top:546px;font-size:12px;line-height:16px;color:#ffffff;letter-spacing:-0.203px;left:455px;">Datei</div>
<svg style="left:495px;top:553px" width="8" height="5"><path d="M0 0H8L4 4.5Z" fill="#fff"/></svg>
<div class="t" style="top:545px;font-size:12px;line-height:16px;color:#1d1a52;letter-spacing:-0.102px;left:529px;">Erfassung in untergeordn...</div>
<div class="t" style="top:545px;font-size:12px;line-height:16px;color:#1d1a52;letter-spacing:-0.078px;left:704px;">Grundlage der Buchung</div>
<div class="t" style="top:545px;font-size:12px;line-height:16px;color:#1d1a52;letter-spacing:-0.070px;left:851px;">Buchungen</div>
<div class="t" style="top:545px;font-size:12px;line-height:16px;color:#1d1a52;left:933px;">Audit-Trail</div>
<div class="t" style="top:545px;font-size:12px;line-height:16px;color:#1d1a52;letter-spacing:-0.115px;left:1011px;">Gebuchte Mehrwertsteuer</div>
<div class="t" style="top:545px;font-size:12px;line-height:16px;color:#1d1a52;left:1169px;">Originaldokument</div>
<div class="t" style="top:545px;font-size:12px;line-height:16px;color:#b8b8b8;letter-spacing:-0.142px;left:1287px;">Zugehörige Belege</div>
<div style="left:1422px;top:542px;width:14px;height:21px;background:#fff;border:1px solid #8a96a8;border-radius:2px;box-sizing:border-box;"></div>
<svg style="left:1425px;top:547px" width="9" height="7"><path d="M0.8 0.8L3.3 3.3L0.8 5.8M4.8 0.8L7.3 3.3L4.8 5.8" stroke="#10103a" stroke-width="1.5" fill="none"/></svg>
<svg style="left:1501px;top:546px" width="16" height="14" viewBox="0 0 16 14"><defs><linearGradient id="lg1" x1="0" y1="0" x2="0" y2="1"><stop offset="0" stop-color="#fafafa"/><stop offset="1" stop-color="#a4a8ac"/></linearGradient></defs><rect x="0.5" y="0.5" width="15" height="13" fill="#fff" stroke="#2e353b"/><rect x="1" y="1" width="4" height="9.5" fill="url(#lg1)"/><rect x="6.5" y="1.5" width="8" height="8.5" fill="#f1f1f1" stroke="#fff"/><path d="M5.5 1V10.5M1 10.5H15" stroke="#2e353b"/><rect x="1" y="11" width="14" height="2" fill="#b2b7bc"/></svg>
<svg style="left:1529px;top:545px" width="17" height="17" viewBox="0 0 17 17"><defs><radialGradient id="hg" cx="0.35" cy="0.3" r="0.8"><stop offset="0" stop-color="#4a74e0"/><stop offset="0.6" stop-color="#1434a8"/><stop offset="1" stop-color="#3a5ac8"/></radialGradient></defs><circle cx="8.3" cy="8.5" r="7.7" fill="#727272"/><circle cx="8.3" cy="8.5" r="6.5" fill="#ececec"/><circle cx="8.3" cy="8.5" r="5.6" fill="url(#hg)"/><path d="M6 6.3Q6.2 4 8.5 4Q10.8 4.1 10.7 6.1Q10.6 7.4 9.3 8.1Q8.6 8.6 8.6 9.8" stroke="#f4f4f4" stroke-width="1.8" fill="none"/><rect x="7.5" y="11" width="2.1" height="2.1" fill="#f4f4f4"/></svg>
<div style="left:440px;top:566px;width:1115px;height:26px;background:linear-gradient(#d8dce0,#eaf4fd 3px,#ebf5fe)"></div>
<div style="left:440px;top:591px;width:1115px;height:1px;background:#a0a8b0"></div>
<div style="left:505px;top:571px;width:76px;height:21px;background:#e8e8e8;border:1px solid #a0a0a0;border-bottom:none;box-sizing:border-box;"></div>
<div style="left:580px;top:571px;width:49px;height:21px;background:#e8e8e8;border:1px solid #a0a0a0;border-bottom:none;box-sizing:border-box;"></div>
<div style="left:440px;top:569px;width:66px;height:24px;background:#fff;border:1px solid #a0a8b0;border-left:none;border-bottom:none;box-sizing:border-box;"></div>
<div class="t" style="top:573px;font-size:12px;line-height:16px;color:#1e1e1e;left:450px;">Überblick</div>
<div class="t" style="top:574px;font-size:12px;line-height:16px;color:#1e1e1e;left:510px;">Allgemeines</div>
<div class="t" style="top:574px;font-size:12px;line-height:16px;color:#1e1e1e;left:585px;">Betrag</div>
<div style="left:440px;top:592px;width:1115px;height:200px;background:#fff;border-right:1px solid #9aa2aa;box-sizing:border-box;"></div>
<div style="left:452px;top:601px;width:1091px;height:200px;border:1px solid #c9d7e8;box-sizing:border-box;background:#fff"></div>
<div style="left:470px;top:622px;width:1061px;height:21px;background:#f0f5fc"></div>
<div style="left:470px;top:643px;width:1061px;height:21px;background:linear-gradient(#d4edfb,#c0e5f9 50%,#b2def7);border-top:1px solid #90d0f0;box-sizing:border-box;"></div>
<div style="left:470px;top:664px;width:1061px;height:21px;background:#f0f5fc"></div>
<div style="left:470px;top:706px;width:1061px;height:21px;background:#f0f5fc"></div>
<div style="left:470px;top:748px;width:1061px;height:21px;background:#f0f5fc"></div>
<div style="left:470px;top:790px;width:1061px;height:10px;background:#f0f5fc"></div>
<div style="left:470px;top:623px;width:1px;height:177px;background:#dde7f3"></div>
<div style="left:590px;top:623px;width:1px;height:177px;background:#dde7f3"></div>
<div style="left:676px;top:623px;width:1px;height:177px;background:#dde7f3"></div>
<div style="left:754px;top:623px;width:1px;height:177px;background:#dde7f3"></div>
<div style="left:886px;top:623px;width:1px;height:177px;background:#dde7f3"></div>
<div style="left:984px;top:623px;width:1px;height:177px;background:#dde7f3"></div>
<div style="left:1051px;top:623px;width:1px;height:177px;background:#dde7f3"></div>
<div style="left:1219px;top:623px;width:1px;height:177px;background:#dde7f3"></div>
<div style="left:1271px;top:623px;width:1px;height:177px;background:#dde7f3"></div>
<div style="left:1428px;top:623px;width:1px;height:177px;background:#dde7f3"></div>
<div style="left:470px;top:622px;width:1072px;height:21px;background:#f0f5fc"></div>
<div style="left:470px;top:623px;width:1px;height:20px;background:#dde7f3"></div>
<div style="left:590px;top:623px;width:1px;height:20px;background:#dde7f3"></div>
<div style="left:676px;top:623px;width:1px;height:20px;background:#dde7f3"></div>
<div style="left:754px;top:623px;width:1px;height:20px;background:#dde7f3"></div>
<div style="left:886px;top:623px;width:1px;height:20px;background:#dde7f3"></div>
<div style="left:984px;top:623px;width:1px;height:20px;background:#dde7f3"></div>
<div style="left:1051px;top:623px;width:1px;height:20px;background:#dde7f3"></div>
<div style="left:1219px;top:623px;width:1px;height:20px;background:#dde7f3"></div>
<div style="left:1271px;top:623px;width:1px;height:20px;background:#dde7f3"></div>
<div style="left:1428px;top:623px;width:1px;height:20px;background:#dde7f3"></div>
<div style="left:1531px;top:622px;width:11px;height:200px;background:#fff"></div>
<div style="left:1531px;top:622px;width:11px;height:21px;background:#f0f5fc"></div>
<div style="left:1531px;top:664px;width:11px;height:21px;background:#f0f5fc"></div>
<div style="left:1531px;top:706px;width:11px;height:21px;background:#f0f5fc"></div>
<div style="left:1531px;top:748px;width:11px;height:21px;background:#f0f5fc"></div>
<div style="left:1531px;top:603px;width:1px;height:200px;background:#dde7f3"></div>
<div style="left:470px;top:603px;width:120px;height:20px;background:linear-gradient(#fefefe,#f7f7f7);border:1px solid #e3e3e3;border-bottom:2px solid #d5d5d5;box-sizing:border-box;"></div>
<div style="left:590px;top:603px;width:86px;height:20px;background:linear-gradient(#fefefe,#f7f7f7);border:1px solid #e3e3e3;border-bottom:2px solid #d5d5d5;box-sizing:border-box;"></div>
<div style="left:676px;top:603px;width:78px;height:20px;background:linear-gradient(#fefefe,#f7f7f7);border:1px solid #e3e3e3;border-bottom:2px solid #d5d5d5;box-sizing:border-box;"></div>
<div style="left:754px;top:603px;width:132px;height:20px;background:linear-gradient(#fefefe,#f7f7f7);border:1px solid #e3e3e3;border-bottom:2px solid #d5d5d5;box-sizing:border-box;"></div>
<div style="left:886px;top:603px;width:98px;height:20px;background:linear-gradient(#fefefe,#f7f7f7);border:1px solid #e3e3e3;border-bottom:2px solid #d5d5d5;box-sizing:border-box;"></div>
<div style="left:984px;top:603px;width:67px;height:20px;background:linear-gradient(#fefefe,#f7f7f7);border:1px solid #e3e3e3;border-bottom:2px solid #d5d5d5;box-sizing:border-box;"></div>
<div style="left:1051px;top:603px;width:168px;height:20px;background:linear-gradient(#fefefe,#f7f7f7);border:1px solid #e3e3e3;border-bottom:2px solid #d5d5d5;box-sizing:border-box;"></div>
<div style="left:1219px;top:603px;width:52px;height:20px;background:linear-gradient(#fefefe,#f7f7f7);border:1px solid #e3e3e3;border-bottom:2px solid #d5d5d5;box-sizing:border-box;"></div>
<div style="left:1271px;top:603px;width:157px;height:20px;background:linear-gradient(#fefefe,#f7f7f7);border:1px solid #e3e3e3;border-bottom:2px solid #d5d5d5;box-sizing:border-box;"></div>
<div style="left:1428px;top:603px;width:103px;height:20px;background:linear-gradient(#fefefe,#f7f7f7);border:1px solid #e3e3e3;border-bottom:2px solid #d5d5d5;box-sizing:border-box;"></div>
<div style="left:455px;top:606px;width:13px;height:13px;border:1px solid #6b6b6b;box-sizing:border-box;background:#fff"></div>
<div class="t" style="top:605px;font-size:12px;line-height:16px;color:#1e1e1e;letter-spacing:-0.159px;left:477px;">Erfassungsnummer</div>
<div class="t" style="top:605px;font-size:12px;line-height:16px;color:#1e1e1e;left:596px;">Beleg</div>
<div class="t" style="top:605px;font-size:12px;line-height:16px;color:#1e1e1e;left:683px;">Datum</div>
<svg style="left:735px;top:610px" width="8" height="5"><path d="M0 5H8L4 0Z" fill="#555"/></svg>
<div class="t" style="top:605px;font-size:12px;line-height:16px;color:#1e1e1e;letter-spacing:-0.338px;left:761px;">Abgeschlossenes Jahr</div>
<div class="t" style="top:605px;font-size:12px;line-height:16px;color:#1e1e1e;left:893px;">Sachkonto</div>
<div class="t" style="top:605px;font-size:12px;line-height:16px;color:#1e1e1e;left:991px;">Währung</div>
<div class="t" style="top:605px;font-size:12px;line-height:16px;color:#1e1e1e;letter-spacing:-0.071px;left:614px;width:600px;text-align:right;">Betrag in Buchungswährung</div>
<div class="t" style="top:605px;font-size:12px;line-height:16px;color:#1e1e1e;left:666px;width:600px;text-align:right;">Betrag</div>
<div class="t" style="top:605px;font-size:12px;line-height:16px;color:#1e1e1e;letter-spacing:-0.102px;left:823px;width:600px;text-align:right;">Betrag in Berichtswährung</div>
<div class="t" style="top:605px;font-size:12px;line-height:16px;color:#1e1e1e;letter-spacing:-0.135px;left:1435px;">Buchungsebene</div>
<div style="left:470px;top:643px;width:121px;height:20px;border:1px dotted #111;box-sizing:border-box;"></div>
<div class="t" style="top:624px;font-size:12px;line-height:16px;color:#1e1e1e;left:477px;">000827</div>
<div class="t" style="top:624px;font-size:12px;line-height:16px;color:#1e1e1e;left:596px;">PRV-100000...</div>
<div class="t" style="top:624px;font-size:12px;line-height:16px;color:#1e1e1e;left:684px;">3/5/2015</div>
<div style="left:814px;top:625px;width:13px;height:13px;border:1px solid #8a8a8a;box-sizing:border-box;background:#fff"></div>
<div class="t" style="top:624px;font-size:12px;line-height:16px;color:#1e1e1e;left:893px;">600180-001-02...</div>
<div class="t" style="top:624px;font-size:12px;line-height:16px;color:#1e1e1e;left:991px;">EUR</div>
<div class="t" style="top:624px;font-size:12px;line-height:16px;color:#1e1e1e;left:614px;width:600px;text-align:right;">120.00</div>
<div class="t" style="top:624px;font-size:12px;line-height:16px;color:#1e1e1e;left:1226px;">120.00</div>
<div class="t" style="top:624px;font-size:12px;line-height:16px;color:#1e1e1e;left:823px;width:600px;text-align:right;">164.38</div>
<div class="t" style="top:624px;font-size:12px;line-height:16px;color:#1e1e1e;left:1432px;">Aktuell</div>
<div class="t" style="top:645px;font-size:12px;line-height:16px;color:#1e1e1e;left:477px;">000827</div>
<div class="t" style="top:645px;font-size:12px;line-height:16px;color:#1e1e1e;left:596px;">PRV-100000...</div>
<div class="t" style="top:645px;font-size:12px;line-height:16px;color:#1e1e1e;left:684px;">3/5/2015</div>
<div style="left:814px;top:646px;width:13px;height:13px;border:1px solid #8a8a8a;box-sizing:border-box;background:#fff"></div>
<div class="t" style="top:645px;font-size:12px;line-height:16px;color:#1e1e1e;left:893px;">200140-001-022</div>
<div class="t" style="top:645px;font-size:12px;line-height:16px;color:#1e1e1e;left:991px;">EUR</div>
<div class="t" style="top:645px;font-size:12px;line-height:16px;color:#1e1e1e;left:614px;width:600px;text-align:right;">-120.00</div>
<div class="t" style="top:645px;font-size:12px;line-height:16px;color:#1e1e1e;left:666px;width:600px;text-align:right;">120.00</div>
<div class="t" style="top:645px;font-size:12px;line-height:16px;color:#1e1e1e;left:823px;width:600px;text-align:right;">-164.38</div>
<div class="t" style="top:645px;font-size:12px;line-height:16px;color:#1e1e1e;left:1432px;">Aktuell</div>
</body></html>
